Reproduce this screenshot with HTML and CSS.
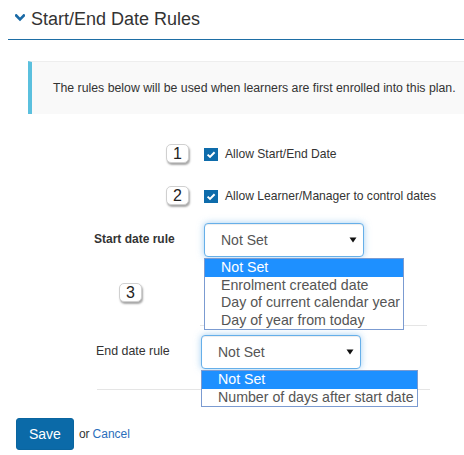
FILE: index.html
```html
<!DOCTYPE html>
<html lang="en">
<head>
<meta charset="utf-8">
<title>Start/End Date Rules</title>
<link rel="stylesheet" href="styles.css">
</head>
<body>
<div class="page">
  <h2 class="section-title">
    <svg class="chevron" width="10" height="8" viewBox="0 0 10 8"><path d="M1.2 1.5 L5 5.3 L8.8 1.5" fill="none" stroke="#1a6aa6" stroke-width="2.6" stroke-linecap="square"/></svg>
    <span>Start/End Date Rules</span>
  </h2>

  <div class="notice">The rules below will be used when learners are first enrolled into this plan.</div>

  <div class="check-row first">
    <span class="checkbox"><svg width="14" height="13" viewBox="0 0 14 13"><rect width="14" height="13" fill="#0e6cab"/><path d="M3.6 6.6 L6 8.9 L10.6 4.2" fill="none" stroke="#fff" stroke-width="2"/></svg></span>
    <span class="check-label">Allow Start/End Date</span>
  </div>
  <div class="check-row">
    <span class="checkbox"><svg width="14" height="13" viewBox="0 0 14 13"><rect width="14" height="13" fill="#0e6cab"/><path d="M3.6 6.6 L6 8.9 L10.6 4.2" fill="none" stroke="#fff" stroke-width="2"/></svg></span>
    <span class="check-label">Allow Learner/Manager to control dates</span>
  </div>

  <div class="rule-row start">
    <span class="rule-label bold">Start date rule</span>
    <div class="select-wrap">
      <div class="select"><span>Not Set</span><svg width="8" height="6" viewBox="0 0 8 6"><path d="M0.5 0.5 H7.5 L4 5.5 Z" fill="#111"/></svg></div>
      <ul class="options">
        <li class="selected">Not Set</li>
        <li>Enrolment created date</li>
        <li>Day of current calendar year</li>
        <li>Day of year from today</li>
      </ul>
    </div>
  </div>

  <div class="divider first-divider"></div>

  <div class="rule-row end">
    <span class="rule-label">End date rule</span>
    <div class="select-wrap">
      <div class="select"><span>Not Set</span><svg width="8" height="6" viewBox="0 0 8 6"><path d="M0.5 0.5 H7.5 L4 5.5 Z" fill="#111"/></svg></div>
      <ul class="options">
        <li class="selected">Not Set</li>
        <li>Number of days after start date</li>
      </ul>
    </div>
  </div>

  <div class="divider second-divider"></div>

  <div class="actions">
    <button class="btn-save" type="button">Save</button>
    <span class="or">or</span>
    <a class="cancel" href="#">Cancel</a>
  </div>

  <span class="badge b1">1</span>
  <span class="badge b2">2</span>
  <span class="badge b3">3</span>
</div>
</body>
</html>
```

FILE: styles.css
```css
* { box-sizing: border-box; }
html, body { margin: 0; padding: 0; background: #fff; }
body {
  font-family: "Liberation Sans", Arial, sans-serif;
  color: #333;
  font-size: 12px;
}
.page {
  position: relative;
  width: 464px;
  height: 455px;
  overflow: hidden;
}
.section-title {
  margin: 9px 0 0 8px;
  padding: 0 0 10px 6px;
  border-bottom: 1px solid #1e6ea5;
  font-size: 18px;
  font-weight: normal;
  line-height: 20px;
  display: flex;
  align-items: center;
  gap: 6px;
  color: #333;
}
.chevron { display: block; margin-top: -2px; margin-left: 1px; }
.notice {
  margin: 21px 0 0 28px;
  padding: 19px 0 19px 21px;
  border-left: 4px solid #5bc0de;
  border-top: 1px solid #eee;
  background: #f9f9f9;
  white-space: nowrap;
  line-height: 14px;
  font-size: 12.3px;
}
.check-row {
  display: flex;
  align-items: center;
  gap: 7px;
  height: 20px;
  padding-left: 204px;
  margin-top: 22px;
}
.check-row.first { margin-top: 30px; }
.checkbox { display: block; width: 14px; height: 13px; }
.checkbox svg { display: block; }
.check-label { font-size: 12.1px; }

.rule-row {
  display: flex;
  align-items: center;
  height: 34px;
}
.rule-row.start { margin-top: 17px; padding-left: 94px; }
.rule-row.start .rule-label { width: 110px; }
.rule-row.end { margin-top: 9px; padding-left: 96px; }
.rule-row.end .rule-label { width: 105px; font-size: 12.4px; }
.rule-label { font-size: 12px; margin-top: -3px; }
.rule-label.bold { font-weight: bold; }

.select-wrap { position: relative; }
.select {
  width: 160px;
  height: 34px;
  border: 1px solid #66afe9;
  border-radius: 4px;
  box-shadow: inset 0 1px 1px rgba(0,0,0,.075), 0 0 7px rgba(102,175,233,.6);
  background: #fff;
  display: flex;
  align-items: center;
  justify-content: space-between;
  padding: 0 6px 0 16px;
  font-size: 14px;
  color: #555;
}
.select svg { display: block; }
.options {
  position: absolute;
  top: 100%;
  left: 0;
  margin: 1px 0 0 0;
  padding: 0;
  list-style: none;
  width: max-content;
  border: 1px solid #7b9bd1;
  background: #fff;
  font-size: 14.2px;
  color: #555;
  z-index: 2;
}
.options li {
  line-height: 17.5px;
  height: 17.5px;
  padding: 0 3px 0 16px;
  white-space: nowrap;
}
.options li.selected { background: #1e90ff; color: #fff; }

.divider { height: 1px; background: #e5e5e5; }
.first-divider { margin: 68px 0 0 200px; width: 227px; }
.second-divider { margin: 20px 0 0 97px; width: 333px; }

.actions {
  margin-top: 28px;
  padding-left: 16px;
  display: flex;
  align-items: center;
  gap: 5px;
}
.btn-save {
  height: 32px;
  padding: 0 12px;
  border: 1px solid #0a659f;
  border-radius: 3px;
  background: #0b6aa8;
  color: #fff;
  font-family: "Liberation Sans", Arial, sans-serif;
  font-size: 14px;
}
.or { font-size: 12px; color: #333; }
.cancel { font-size: 12px; color: #2a6ebb; text-decoration: none; margin-left: -2px; }

.badge {
  position: absolute;
  width: 23px;
  height: 19px;
  border: 1px solid #d0d0d0;
  border-radius: 5px;
  background: #fff;
  box-shadow: 1px 2px 2px rgba(0,0,0,.35);
  font-size: 16px;
  line-height: 17px;
  text-align: center;
  color: #222;
}
.b1 { left: 166px; top: 144px; }
.b2 { left: 166px; top: 186px; }
.b3 { left: 119px; top: 283px; }
```
